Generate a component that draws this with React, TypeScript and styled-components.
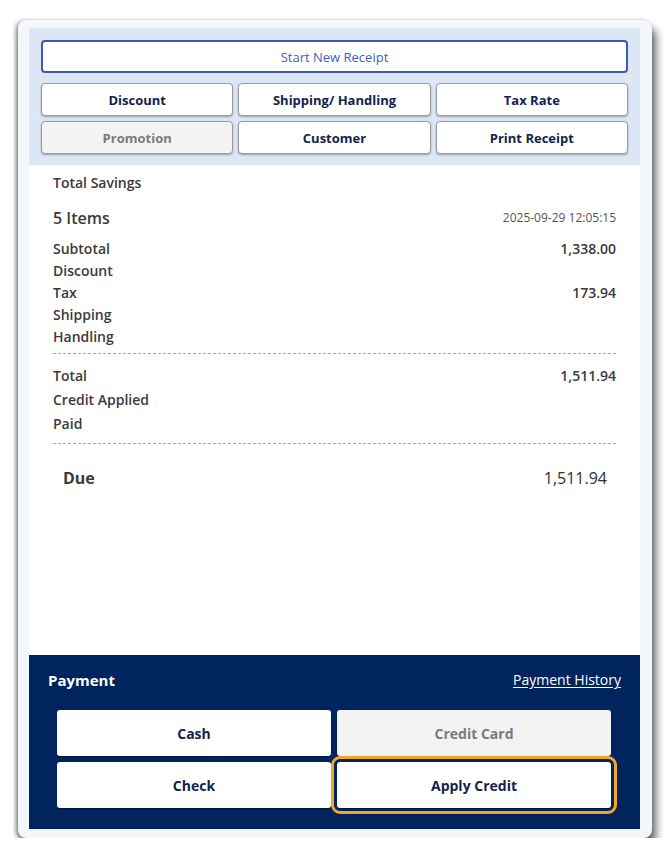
import React from 'react'
import styled, {createGlobalStyle} from 'styled-components'

const COLORS = {
    navy: '#00245e',
    ink: '#14224d',
    text: '#3a3a3a',
    muted: '#555555',
    panel: '#dce6f4',
    card: '#f3f6fb',
    link: '#3d5cc4',
    orange: '#f5a623',
    disabledBg: '#f3f3f3',
    disabledText: '#7a7a7a',
}

const GlobalStyle = createGlobalStyle`
  html, body {
    margin: 0;
    padding: 0;
    background: #ffffff;
  }
  body {
    font-family: 'Open Sans', 'Noto Sans', 'Liberation Sans', sans-serif;
    color: ${COLORS.text};
  }
`

const SUMMARY = [
    {label: 'Subtotal', value: '1,338.00'},
    {label: 'Discount', value: ''},
    {label: 'Tax', value: '173.94'},
    {label: 'Shipping', value: ''},
    {label: 'Handling', value: ''},
]

const TOTALS = [
    {label: 'Total', value: '1,511.94'},
    {label: 'Credit Applied', value: ''},
    {label: 'Paid', value: ''},
]

const ACTIONS = [
    {text: 'Discount', disabled: false},
    {text: 'Shipping/ Handling', disabled: false},
    {text: 'Tax Rate', disabled: false},
    {text: 'Promotion', disabled: true},
    {text: 'Customer', disabled: false},
    {text: 'Print Receipt', disabled: false},
]

const PAYMENTS = [
    {text: 'Cash', disabled: false, focused: false},
    {text: 'Credit Card', disabled: true, focused: false},
    {text: 'Check', disabled: false, focused: false},
    {text: 'Apply Credit', disabled: false, focused: true},
]

const App = () => {
    return (
        <>
            <GlobalStyle/>
            <Card>
                <Toolbar>
                    <StartButton>Start New Receipt</StartButton>
                    <ActionGrid>
                        {ACTIONS.map(a => (
                            <ActionButton key={a.text} $disabled={a.disabled}>{a.text}</ActionButton>
                        ))}
                    </ActionGrid>
                </Toolbar>
                <Summary>
                    <Savings>Total Savings</Savings>
                    <ItemsRow>
                        <ItemsCount>5 Items</ItemsCount>
                        <Stamp>2025-09-29 12:05:15</Stamp>
                    </ItemsRow>
                    <Lines>
                        {SUMMARY.map(r => (
                            <Line key={r.label}>
                                <span>{r.label}</span>
                                <span>{r.value}</span>
                            </Line>
                        ))}
                    </Lines>
                    <Divider/>
                    <TotalLines>
                        {TOTALS.map(r => (
                            <TotalLine key={r.label}>
                                <span>{r.label}</span>
                                <span>{r.value}</span>
                            </TotalLine>
                        ))}
                    </TotalLines>
                    <Divider $gap={7}/>
                    <DueRow>
                        <DueLabel>Due</DueLabel>
                        <DueValue>1,511.94</DueValue>
                    </DueRow>
                </Summary>
                <Payment>
                    <PaymentHeader>
                        <PaymentTitle>Payment</PaymentTitle>
                        <HistoryLink href="#">Payment History</HistoryLink>
                    </PaymentHeader>
                    <PaymentGrid>
                        {PAYMENTS.map(p => (
                            <PayButton key={p.text} $disabled={p.disabled} $focused={p.focused}>
                                {p.text}
                            </PayButton>
                        ))}
                    </PaymentGrid>
                </Payment>
            </Card>
        </>
    )
}

const Card = styled.main`
  box-sizing: border-box;
  width: 634px;
  height: 818px;
  margin: 20px 0 0 18px;
  padding: 8px 12px 9px 11px;
  display: flex;
  flex-direction: column;
  background: ${COLORS.card};
  border-radius: 8px;
  box-shadow: 4px 8px 8px rgba(0, 0, 0, 0.6), -2px 1px 4px rgba(0, 0, 0, 0.45);
`

const Toolbar = styled.section`
  background: ${COLORS.panel};
  padding: 12px 12px 11px;
  display: flex;
  flex-direction: column;
  gap: 10px;
`

const StartButton = styled.button`
  height: 33px;
  border: 2px solid #3a58bf;
  border-radius: 4px;
  background: #ffffff;
  color: ${COLORS.link};
  font-family: inherit;
  font-size: 13px;
  cursor: pointer;
`

const ActionGrid = styled.div`
  display: grid;
  grid-template-columns: repeat(3, 1fr);
  gap: 5px 5px;
`

const ActionButton = styled.button<{ $disabled: boolean }>`
  height: 33px;
  border: 1px solid #9b9b9b;
  border-radius: 4px;
  background: ${p => p.$disabled ? COLORS.disabledBg : '#ffffff'};
  color: ${p => p.$disabled ? COLORS.disabledText : COLORS.ink};
  box-shadow: 0 1px 2px rgba(0, 0, 0, 0.3);
  font-family: inherit;
  font-size: 13px;
  font-weight: 700;
`

const Summary = styled.section`
  flex: 1;
  background: #ffffff;
  padding: 7px 24px 0;
  color: ${COLORS.text};
  font-size: 14px;
  font-weight: 600;
`

const Savings = styled.div`
  line-height: 22px;
`

const ItemsRow = styled.div`
  margin-top: 12px;
  display: flex;
  justify-content: space-between;
  align-items: center;
  line-height: 24px;
`

const ItemsCount = styled.span`
  font-size: 16px;
`

const Stamp = styled.span`
  font-size: 12px;
  font-weight: 400;
  color: ${COLORS.muted};
`

const Lines = styled.div`
  margin-top: 8px;
`

const Line = styled.div`
  display: flex;
  justify-content: space-between;
  line-height: 22px;
  height: 22px;
`

const TotalLines = styled.div`
  margin-top: 10px;
`

const TotalLine = styled(Line)`
  line-height: 24px;
  height: 24px;
`

const Divider = styled.hr<{ $gap?: number }>`
  margin: ${p => p.$gap ?? 5}px 0 0;
  border: none;
  border-top: 1px dashed #a8a8a8;
  height: 0;
`

const DueRow = styled.div`
  margin-top: 20px;
  padding: 0 9px 0 10px;
  display: flex;
  justify-content: space-between;
  line-height: 28px;
  font-size: 16px;
`

const DueLabel = styled.span`
  font-weight: 700;
`

const DueValue = styled.span`
  font-weight: 400;
  color: #2e2e2e;
`

const Payment = styled.section`
  background: ${COLORS.navy};
  padding: 14px 19px 21px;
`

const PaymentHeader = styled.div`
  display: flex;
  justify-content: space-between;
  align-items: center;
  line-height: 22px;
`

const PaymentTitle = styled.span`
  color: #ffffff;
  font-size: 15px;
  font-weight: 700;
`

const HistoryLink = styled.a`
  color: #ffffff;
  font-size: 14px;
  text-decoration: underline;
  text-underline-offset: 2px;
`

const PaymentGrid = styled.div`
  margin: 19px 10px 0 9px;
  display: grid;
  grid-template-columns: 1fr 1fr;
  gap: 6px;
`

const PayButton = styled.button<{ $disabled: boolean, $focused: boolean }>`
  height: 46px;
  border: none;
  border-radius: 3px;
  background: ${p => p.$disabled ? COLORS.disabledBg : '#ffffff'};
  color: ${p => p.$disabled ? COLORS.disabledText : COLORS.ink};
  box-shadow: 0 1px 1px rgba(0, 0, 0, 0.35);
  font-family: inherit;
  font-size: 14px;
  font-weight: 700;
  outline: ${p => p.$focused ? `3px solid ${COLORS.orange}` : 'none'};
  outline-offset: 3px;
`

export default App
